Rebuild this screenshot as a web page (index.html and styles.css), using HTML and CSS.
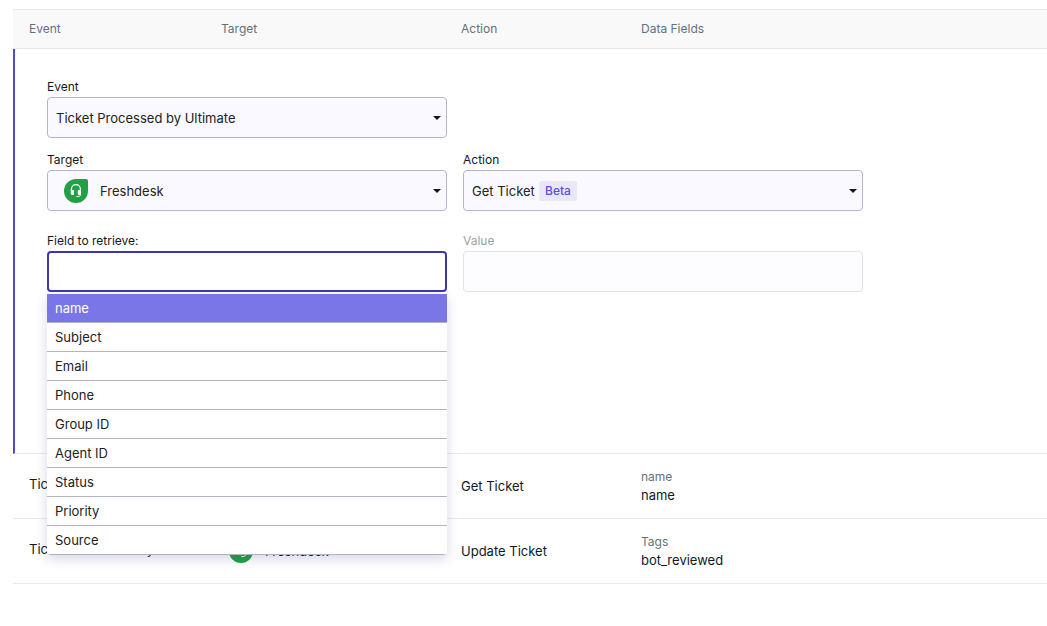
FILE: index.html
```html
<!DOCTYPE html>
<html lang="en">
<head>
<meta charset="utf-8">
<title>Event actions</title>
<link rel="stylesheet" href="styles.css">
</head>
<body>
<svg class="defs" aria-hidden="true">
  <symbol id="freshdesk" viewBox="0 0 24 24">
    <path fill="#22a045" d="M12 0h10a2 2 0 0 1 2 2v10A12 12 0 1 1 12 0z"/>
    <path fill="none" stroke="#fff" stroke-width="1.200" d="M7.400 12v-1.800a4.500 4.500 0 0 1 9 0V12"/>
    <path fill="#fff" d="M6.800 11h2.400q.8 0 .8.800v3.400q0 .8-.8.800h-.9q-1.500 0-1.500-1.500z"/>
    <path fill="#fff" d="M17 11h-2.400q-.8 0-.8.800v3.400q0 .8.800.8h.9q1.500 0 1.500-1.500z"/>
    <path fill="none" stroke="#fff" stroke-width="1" d="M16.400 15v.8c0 1.100-.7 1.700-1.800 1.700h-2.200"/>
  </symbol>
  <symbol id="caret" viewBox="0 0 8 4">
    <path fill="#101828" d="M0 0h8L4 4z"/>
  </symbol>
</svg>
<main class="page">
  <table class="actions">
    <colgroup>
      <col class="col-event"><col class="col-target"><col class="col-action"><col>
    </colgroup>
    <thead>
      <tr><th>Event</th><th>Target</th><th>Action</th><th>Data Fields</th></tr>
    </thead>
    <tbody>
      <tr class="editing">
        <td colspan="4">
          <form class="editor">
            <div class="field">
              <label for="event">Event</label>
              <div class="control">
                <select id="event"><option>Ticket Processed by Ultimate</option></select>
                <svg class="caret" aria-hidden="true"><use href="#caret"/></svg>
              </div>
            </div>
            <div class="field target">
              <label for="target">Target</label>
              <div class="control">
                <select id="target" class="with-logo"><option>Freshdesk</option></select>
                <svg class="logo select-logo" aria-hidden="true"><use href="#freshdesk"/></svg>
                <svg class="caret" aria-hidden="true"><use href="#caret"/></svg>
              </div>
            </div>
            <div class="field">
              <label for="action">Action</label>
              <div class="control">
                <select id="action"><option>Get Ticket</option></select>
                <span class="badge">Beta</span>
                <svg class="caret" aria-hidden="true"><use href="#caret"/></svg>
              </div>
            </div>
            <div class="field spaced">
              <label for="retrieve">Field to retrieve:</label>
              <div class="control">
                <input id="retrieve" class="active" type="text" role="combobox" aria-expanded="true" aria-controls="fields" autocomplete="off">
                <ul id="fields" class="options" role="listbox">
                  <li role="option" aria-selected="true" class="selected">name</li>
                  <li role="option">Subject</li>
                  <li role="option">Email</li>
                  <li role="option">Phone</li>
                  <li role="option">Group ID</li>
                  <li role="option">Agent ID</li>
                  <li role="option">Status</li>
                  <li role="option">Priority</li>
                  <li role="option">Source</li>
                </ul>
              </div>
            </div>
            <div class="field spaced disabled">
              <label for="value">Value</label>
              <div class="control"><input id="value" type="text" disabled></div>
            </div>
          </form>
        </td>
      </tr>
      <tr>
        <td class="event">Ticket Processed by Ultimate</td>
        <td><div class="brand"><svg class="logo" aria-hidden="true"><use href="#freshdesk"/></svg><span>Freshdesk</span></div></td>
        <td>Get Ticket</td>
        <td><div class="key">name</div><div>name</div></td>
      </tr>
      <tr>
        <td class="event">Ticket Processed by Ultimate</td>
        <td><div class="brand"><svg class="logo" aria-hidden="true"><use href="#freshdesk"/></svg><span>Freshdesk</span></div></td>
        <td>Update Ticket</td>
        <td><div class="key">Tags</div><div>bot_reviewed</div></td>
      </tr>
    </tbody>
  </table>
</main>
</body>
</html>
```
FILE: styles.css
```css
* { box-sizing: border-box; }
body {
  margin: 0;
  background: #fff;
  color: #101828;
  font: 13px/18px Inter, "Liberation Sans", sans-serif;
}
.defs { display: none; }
.page { padding: 9px 0 0 13px; }

.actions {
  width: 100%;
  table-layout: fixed;
  border-collapse: separate;
  border-spacing: 0;
}
.col-event { width: 192px; }
.col-target { width: 240px; }
.col-action { width: 180px; }
th {
  height: 40px;
  padding: 0 16px;
  border-top: 1px solid #e6e9ec;
  border-bottom: 1px solid #e6e9ec;
  background: #f9f9f9;
  color: #62717e;
  font-size: 12px;
  font-weight: 400;
  text-align: left;
}
td {
  height: 65px;
  padding: 0 16px;
  border-bottom: 1px solid #e8eaed;
  vertical-align: middle;
}
.event { padding-bottom: 4px; white-space: nowrap; }
.brand { display: flex; align-items: center; gap: 12px; padding-left: 8px; }
.logo { display: block; width: 24px; height: 24px; }
.key { color: #62717e; font-size: 12px; }

.editing td {
  padding: 28px 32px 161px;
  border-left: 2px solid #5048d8;
}
.editor {
  display: grid;
  grid-template-columns: 1fr 1fr;
  gap: 12px 16px;
  max-width: 816px;
}
.target { grid-column: 1; }
.spaced { padding-top: 8px; }
.field label { display: block; font-size: 12px; line-height: 20px; }
.control { position: relative; }
select, input {
  display: block;
  width: 100%;
  height: 41px;
  margin: 0;
  padding: 0 24px 0 8px;
  border: 1px solid #b8b3d6;
  border-radius: 4px;
  outline: 0;
  background: #faf9ff;
  color: #222;
  font: inherit;
  appearance: none;
}
.with-logo { padding-left: 52px; }
.select-logo { position: absolute; top: 9px; left: 17px; pointer-events: none; }
.caret {
  position: absolute;
  top: 19px;
  right: 6px;
  width: 8px;
  height: 4px;
  pointer-events: none;
}
.badge {
  position: absolute;
  top: 11px;
  left: 76px;
  padding: 0 6px;
  border-radius: 2px;
  background: #e9e8f7;
  color: #5a52dc;
  font-size: 12px;
  font-weight: 500;
  line-height: 20px;
  pointer-events: none;
}
.active { border: 2px solid #3c36b0; background: #fff; }
.disabled label { color: #9aa1a9; }
.disabled input { border-color: #e2e0ee; background: #fdfdff; }

.options {
  position: absolute;
  z-index: 1;
  top: 43px;
  left: 0;
  width: 100%;
  margin: 0;
  padding: 0;
  border-radius: 0 0 4px 4px;
  overflow: hidden;
  background: #fff;
  box-shadow: 0 4px 12px rgba(60, 54, 140, 0.2);
  color: #222;
  list-style: none;
}
.options li {
  padding: 0 8px;
  border-bottom: 1px solid #b0b4be;
  line-height: 28px;
}
.options .selected { background: #7a76e8; color: #fff; }
```
